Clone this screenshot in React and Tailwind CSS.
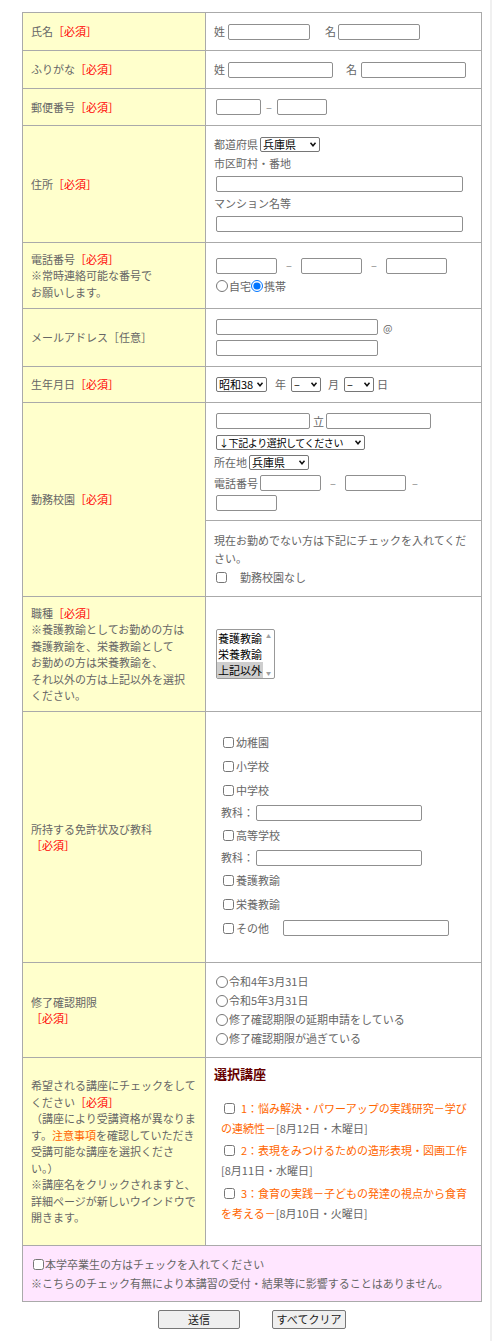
import { useState } from 'react'

const Req = () => <span className="text-[#ff0000]">［必須］</span>

function TextBox({ w, className = '' }) {
  return (
    <input
      type="text"
      className={`h-[16px] shrink-0 border border-[#8f8f8f] rounded-[2px] bg-white ${w} ${className}`}
    />
  )
}

// select drawn without the native arrow so the narrow widths of the page fit
function Sel({ w, text = 'text-[11px]', children }) {
  return (
    <span className={`relative inline-flex shrink-0 ${w}`}>
      <select
        className={`appearance-none w-full h-[15px] border border-[#767676] rounded-[2px] bg-white text-black leading-[13px] py-0 pl-[2px] pr-[11px] whitespace-nowrap overflow-hidden ${text}`}
      >
        {children}
      </select>
      <svg
        viewBox="0 0 8 6"
        className="absolute right-[3px] top-[5px] w-[8px] h-[5px] pointer-events-none"
      >
        <polyline points="1,1 4,4.5 7,1" fill="none" stroke="#111" strokeWidth="1.8" />
      </svg>
    </span>
  )
}

function Dash({ w }) {
  return <span className={`text-center text-[#888] ${w}`}>–</span>
}

function Check({ className = '' }) {
  return <input type="checkbox" className={`w-[11px] h-[11px] m-0 shrink-0 ${className}`} />
}

function Radio({ name, checked }) {
  return (
    <input
      type="radio"
      name={name}
      defaultChecked={checked}
      className="w-[12px] h-[12px] m-0 shrink-0"
    />
  )
}

function Row({ label, h, first, children, right = 'flex items-center px-2' }) {
  return (
    <div className={`flex ${h} ${first ? '' : 'border-t border-[#aaa]'}`}>
      <div className="w-[183px] shrink-0 bg-[#ffffcc] border-r border-[#aaa] pl-2 flex items-center">
        <div className="leading-[16.5px] whitespace-nowrap">{label}</div>
      </div>
      <div className={`flex-1 ${right}`}>{children}</div>
    </div>
  )
}

export default function App() {
  const [kind, setKind] = useState('上記以外')

  return (
    <div className="w-[492px] min-h-screen bg-white border-r-2 border-[#f0f0f0] pt-[12px] font-['Noto_Sans_CJK_JP',sans-serif] text-[11px] text-[#666]">
      <div className="ml-[22px] w-[460px] border border-[#aaa]">
        <Row first h="h-[37px]" label={<>氏名<Req /></>}>
          <span>姓</span>
          <TextBox w="w-[82px]" className="ml-[3px]" />
          <span className="ml-[15px]">名</span>
          <TextBox w="w-[82px]" className="ml-[2px]" />
        </Row>

        <Row h="h-[38px]" label={<>ふりがな<Req /></>}>
          <span>姓</span>
          <TextBox w="w-[105px]" className="ml-[3px]" />
          <span className="ml-[13px]">名</span>
          <TextBox w="w-[105px]" className="ml-[4px]" />
        </Row>

        <Row h="h-[37px]" label={<>郵便番号<Req /></>}>
          <TextBox w="w-[45px]" className="ml-[2px]" />
          <Dash w="w-[16px]" />
          <TextBox w="w-[50px]" />
        </Row>

        <Row h="h-[117px]" label={<>住所<Req /></>} right="flex flex-col justify-center px-2">
          <div className="flex items-center h-[16px]">
            <span>都道府県</span>
            <span className="ml-[2px] flex">
              <Sel w="w-[60px]">
                <option>兵庫県</option>
              </Sel>
            </span>
          </div>
          <div className="mt-[3px] leading-[16px]">市区町村・番地</div>
          <TextBox w="w-[247px]" className="ml-[2px] mt-[5px]" />
          <div className="mt-[3px] leading-[16px]">マンション名等</div>
          <TextBox w="w-[247px]" className="ml-[2px] mt-[5px]" />
        </Row>

        <Row
          h="h-[66px]"
          label={
            <>
              電話番号<Req />
              <br />
              ※常時連絡可能な番号で
              <br />
              お願いします。
            </>
          }
          right="flex flex-col justify-center px-2"
        >
          <div className="flex items-center">
            <TextBox w="w-[61px]" className="ml-[2px]" />
            <Dash w="w-[24px]" />
            <TextBox w="w-[61px]" />
            <Dash w="w-[24px]" />
            <TextBox w="w-[61px]" />
          </div>
          <div className="flex items-center mt-[4px] ml-[2px] h-[16px]">
            <Radio name="tel" />
            <span className="ml-[1px]">自宅</span>
            <Radio name="tel" checked />
            <span className="ml-[1px]">携帯</span>
          </div>
        </Row>

        <Row h="h-[58px]" label={<>メールアドレス［任意］</>} right="flex flex-col justify-center px-2">
          <div className="flex items-center">
            <TextBox w="w-[162px]" className="ml-[2px]" />
            <span className="ml-[5px] text-[10px]">@</span>
          </div>
          <TextBox w="w-[162px]" className="ml-[2px] mt-[5px]" />
        </Row>

        <Row h="h-[36px]" label={<>生年月日<Req /></>}>
          <span className="ml-[2px] flex">
            <Sel w="w-[51px]">
              <option>昭和38</option>
            </Sel>
          </span>
          <span className="ml-[8px]">年</span>
          <span className="ml-[5px] flex">
            <Sel w="w-[30px]">
              <option>–</option>
            </Sel>
          </span>
          <span className="ml-[7px]">月</span>
          <span className="ml-[5px] flex">
            <Sel w="w-[30px]">
              <option>–</option>
            </Sel>
          </span>
          <span className="ml-[3px]">日</span>
        </Row>

        <Row h="h-[194px]" label={<>勤務校園<Req /></>} right="flex flex-col">
          <div className="h-[117px] px-2 pt-[10px]">
            <div className="flex items-center">
              <TextBox w="w-[94px]" className="ml-[2px]" />
              <span className="ml-[3px]">立</span>
              <TextBox w="w-[105px]" className="ml-[2px]" />
            </div>
            <div className="flex mt-[5px] ml-[2px]">
              <Sel w="w-[149px]" text="text-[10px] tracking-[-0.4px]">
                <option>↓下記より選択してください</option>
              </Sel>
            </div>
            <div className="flex items-center mt-[5px] h-[15px]">
              <span>所在地</span>
              <span className="ml-[2px] flex">
                <Sel w="w-[60px]">
                  <option>兵庫県</option>
                </Sel>
              </span>
            </div>
            <div className="flex items-center mt-[5px]">
              <span>電話番号</span>
              <TextBox w="w-[61px]" className="ml-[2px]" />
              <Dash w="w-[24px]" />
              <TextBox w="w-[61px]" />
              <Dash w="w-[18px]" />
            </div>
            <TextBox w="w-[61px]" className="ml-[2px] mt-[4px]" />
          </div>
          <div className="flex-1 border-t border-[#aaa] px-2 flex flex-col justify-center">
            <div className="leading-[18px]">
              現在お勤めでない方は下記にチェックを入れてくだ
              <br />
              さい。
            </div>
            <div className="flex items-center mt-[2px] h-[18px]">
              <Check className="ml-[2px]" />
              <span className="ml-[13px]">勤務校園なし</span>
            </div>
          </div>
        </Row>

        <Row
          h="h-[115px]"
          label={
            <>
              職種<Req />
              <br />
              ※養護教諭としてお勤めの方は
              <br />
              養護教諭を、栄養教諭として
              <br />
              お勤めの方は栄養教諭を、
              <br />
              それ以外の方は上記以外を選択
              <br />
              ください。
            </>
          }
        >
          <div className="ml-[2px] w-[59px] h-[50px] border border-[#999] rounded-[2px] bg-white flex text-black leading-[16px]">
            <div className="flex-1 flex flex-col">
              {['養護教諭', '栄養教諭', '上記以外'].map((k) => (
                <div
                  key={k}
                  onClick={() => setKind(k)}
                  className={`pl-[1px] whitespace-nowrap ${kind === k ? 'bg-[#cecece]' : ''}`}
                >
                  {k}
                </div>
              ))}
            </div>
            <div className="w-[11px] flex flex-col justify-between items-center py-[3px] text-[5px] leading-none text-[#a0a0a0]">
              <span>▲</span>
              <span>▼</span>
            </div>
          </div>
        </Row>

        <Row
          h="h-[251px]"
          label={
            <>
              所持する免許状及び教科
              <br />
              <Req />
            </>
          }
          right="flex flex-col px-2 pt-[18px]"
        >
          {[
            ['幼稚園'],
            ['小学校'],
            ['中学校', true],
            ['高等学校', true],
            ['養護教諭'],
            ['栄養教諭'],
          ].map(([name, subject]) => (
            <div key={name}>
              <div className="flex items-center h-[24px] pl-[9px]">
                <Check />
                <span className="ml-[2px]">{name}</span>
              </div>
              {subject && (
                <div className="flex items-center h-[21px] pl-[7px]">
                  <span>教科：</span>
                  <TextBox w="w-[166px]" className="ml-[2px]" />
                </div>
              )}
            </div>
          ))}
          <div className="flex items-center h-[24px] pl-[9px]">
            <Check />
            <span className="ml-[2px]">その他</span>
            <TextBox w="w-[166px]" className="ml-[14px]" />
          </div>
        </Row>

        <Row
          h="h-[95px]"
          label={
            <>
              修了確認期限
              <br />
              <Req />
            </>
          }
          right="flex flex-col justify-center px-2"
        >
          {['令和4年3月31日', '令和5年3月31日', '修了確認期限の延期申請をしている', '修了確認期限が過ぎている'].map(
            (t) => (
              <div key={t} className="flex items-center h-[19px] ml-[2px]">
                <Radio name="limit" />
                <span className="ml-[1px]">{t}</span>
              </div>
            )
          )}
        </Row>

        <Row
          h="h-[188px]"
          label={
            <>
              希望される講座にチェックをして
              <br />
              ください<Req />
              <br />
              （講座により受講資格が異なりま
              <br />
              す。<span className="text-[#ff6600]">注意事項</span>を確認していただき
              <br />
              受講可能な講座を選択くださ
              <br />
              い。）
              <br />
              ※講座名をクリックされますと、
              <br />
              詳細ページが新しいウインドウで
              <br />
              開きます。
            </>
          }
          right="px-2 pt-[6px]"
        >
          <div className="text-[13px] leading-[20px] font-bold text-[#660000]">選択講座</div>
          <div className="mt-[14px] pl-[7px] leading-[20px] whitespace-nowrap">
            <Check className="ml-[3px] mr-[6px] align-[-1px]" />
            <span className="text-[#ff6600]">
              1：悩み解決・パワーアップの実践研究－学び
              <br />
              の連続性－
            </span>
            [8月12日・木曜日]
          </div>
          <div className="mt-[2px] pl-[7px] leading-[20px] whitespace-nowrap">
            <Check className="ml-[3px] mr-[6px] align-[-1px]" />
            <span className="text-[#ff6600]">2：表現をみつけるための造形表現・図画工作</span>
            <br />
            [8月11日・水曜日]
          </div>
          <div className="mt-[3px] pl-[7px] leading-[20px] whitespace-nowrap">
            <Check className="ml-[3px] mr-[6px] align-[-1px]" />
            <span className="text-[#ff6600]">
              3：食育の実践－子どもの発達の視点から食育
              <br />
              を考える－
            </span>
            [8月10日・火曜日]
          </div>
        </Row>

        <div className="h-[56px] border-t border-[#aaa] bg-[#ffe6ff] flex flex-col justify-center pl-2 leading-[19px]">
          <div className="flex items-center">
            <Check className="ml-[2px]" />
            <span className="ml-[1px]">本学卒業生の方はチェックを入れてください</span>
          </div>
          <div>※こちらのチェック有無により本講習の受付・結果等に影響することはありません。</div>
        </div>
      </div>

      <div className="flex justify-center gap-[32px] mt-[8px] ml-[22px] w-[460px] pb-[12px]">
        <button
          type="button"
          className="w-[82px] h-[19px] border border-[#767676] rounded-[2px] bg-[#efefef] text-[#222] text-[11px] leading-none"
        >
          送信
        </button>
        <button
          type="button"
          className="w-[74px] h-[19px] border border-[#767676] rounded-[2px] bg-[#efefef] text-[#222] text-[11px] leading-none"
        >
          すべてクリア
        </button>
      </div>
    </div>
  )
}
